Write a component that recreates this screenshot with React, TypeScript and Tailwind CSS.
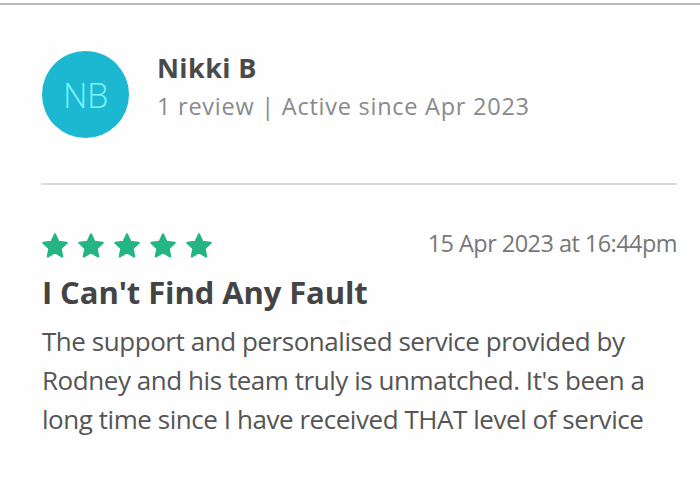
import React from "react";

function Star() {
  return (
    <svg width="30" height="30" viewBox="0 0 24 24" className="block">
      <path
        d="M12 2.6l2.85 6.05 6.55.8-4.85 4.5 1.3 6.5L12 17.2l-5.85 3.25 1.3-6.5-4.85-4.5 6.55-.8z"
        fill="#25b585"
        stroke="#25b585"
        strokeWidth="1.6"
        strokeLinejoin="round"
      />
    </svg>
  );
}

export default function App() {
  return (
    <div className="w-[700px] h-[482px] bg-[#fefefe] overflow-hidden font-['Open_Sans',sans-serif]">
      <div className="pt-[3px]">
        <div className="h-[2px] bg-[#b8b8b8]" />
      </div>
      <div className="flex items-start pl-[42px] pt-[46px]">
        <div className="w-[87px] h-[87px] rounded-full bg-[#1cb8d1] flex items-center justify-center">
          <span className="text-[34px] font-light text-[#7ff3f7] leading-none tracking-[-0.5px]">NB</span>
        </div>
        <div className="ml-[28px] mt-[0px]">
          <div className="text-[27px] font-bold text-[#4a4a4a] leading-[34px] tracking-[0.4px]">Nikki B</div>
          <div className="text-[23.5px] text-[#8a8a8a] leading-[30px] mt-[6px] tracking-[0.75px]">1 review | Active since Apr 2023</div>
        </div>
      </div>
      <div className="ml-[41px] mr-[23px] mt-[45px] h-[2px] bg-[#dadada]" />
      <div className="pl-[42px] pr-[23px]">
        <div className="flex items-start justify-between mt-[43px]">
          <div className="flex gap-[6px] -ml-[2px] mt-[3px]">
            <Star />
            <Star />
            <Star />
            <Star />
            <Star />
          </div>
          <div className="text-[23.5px] leading-[30px] text-[#777] tracking-[-0.55px]">15 Apr 2023 at 16:44pm</div>
        </div>
        <div className="text-[31px] font-bold text-[#444] leading-[40px] mt-[11px] tracking-[-0.1px]">I Can't Find Any Fault</div>
        <div className="text-[26px] text-[#555] leading-[39px] mt-[10px] tracking-[-0.45px]">
          The support and personalised service provided by Rodney and his team truly is unmatched. It's been a long time since I have received THAT level of service
        </div>
      </div>
    </div>
  );
}
